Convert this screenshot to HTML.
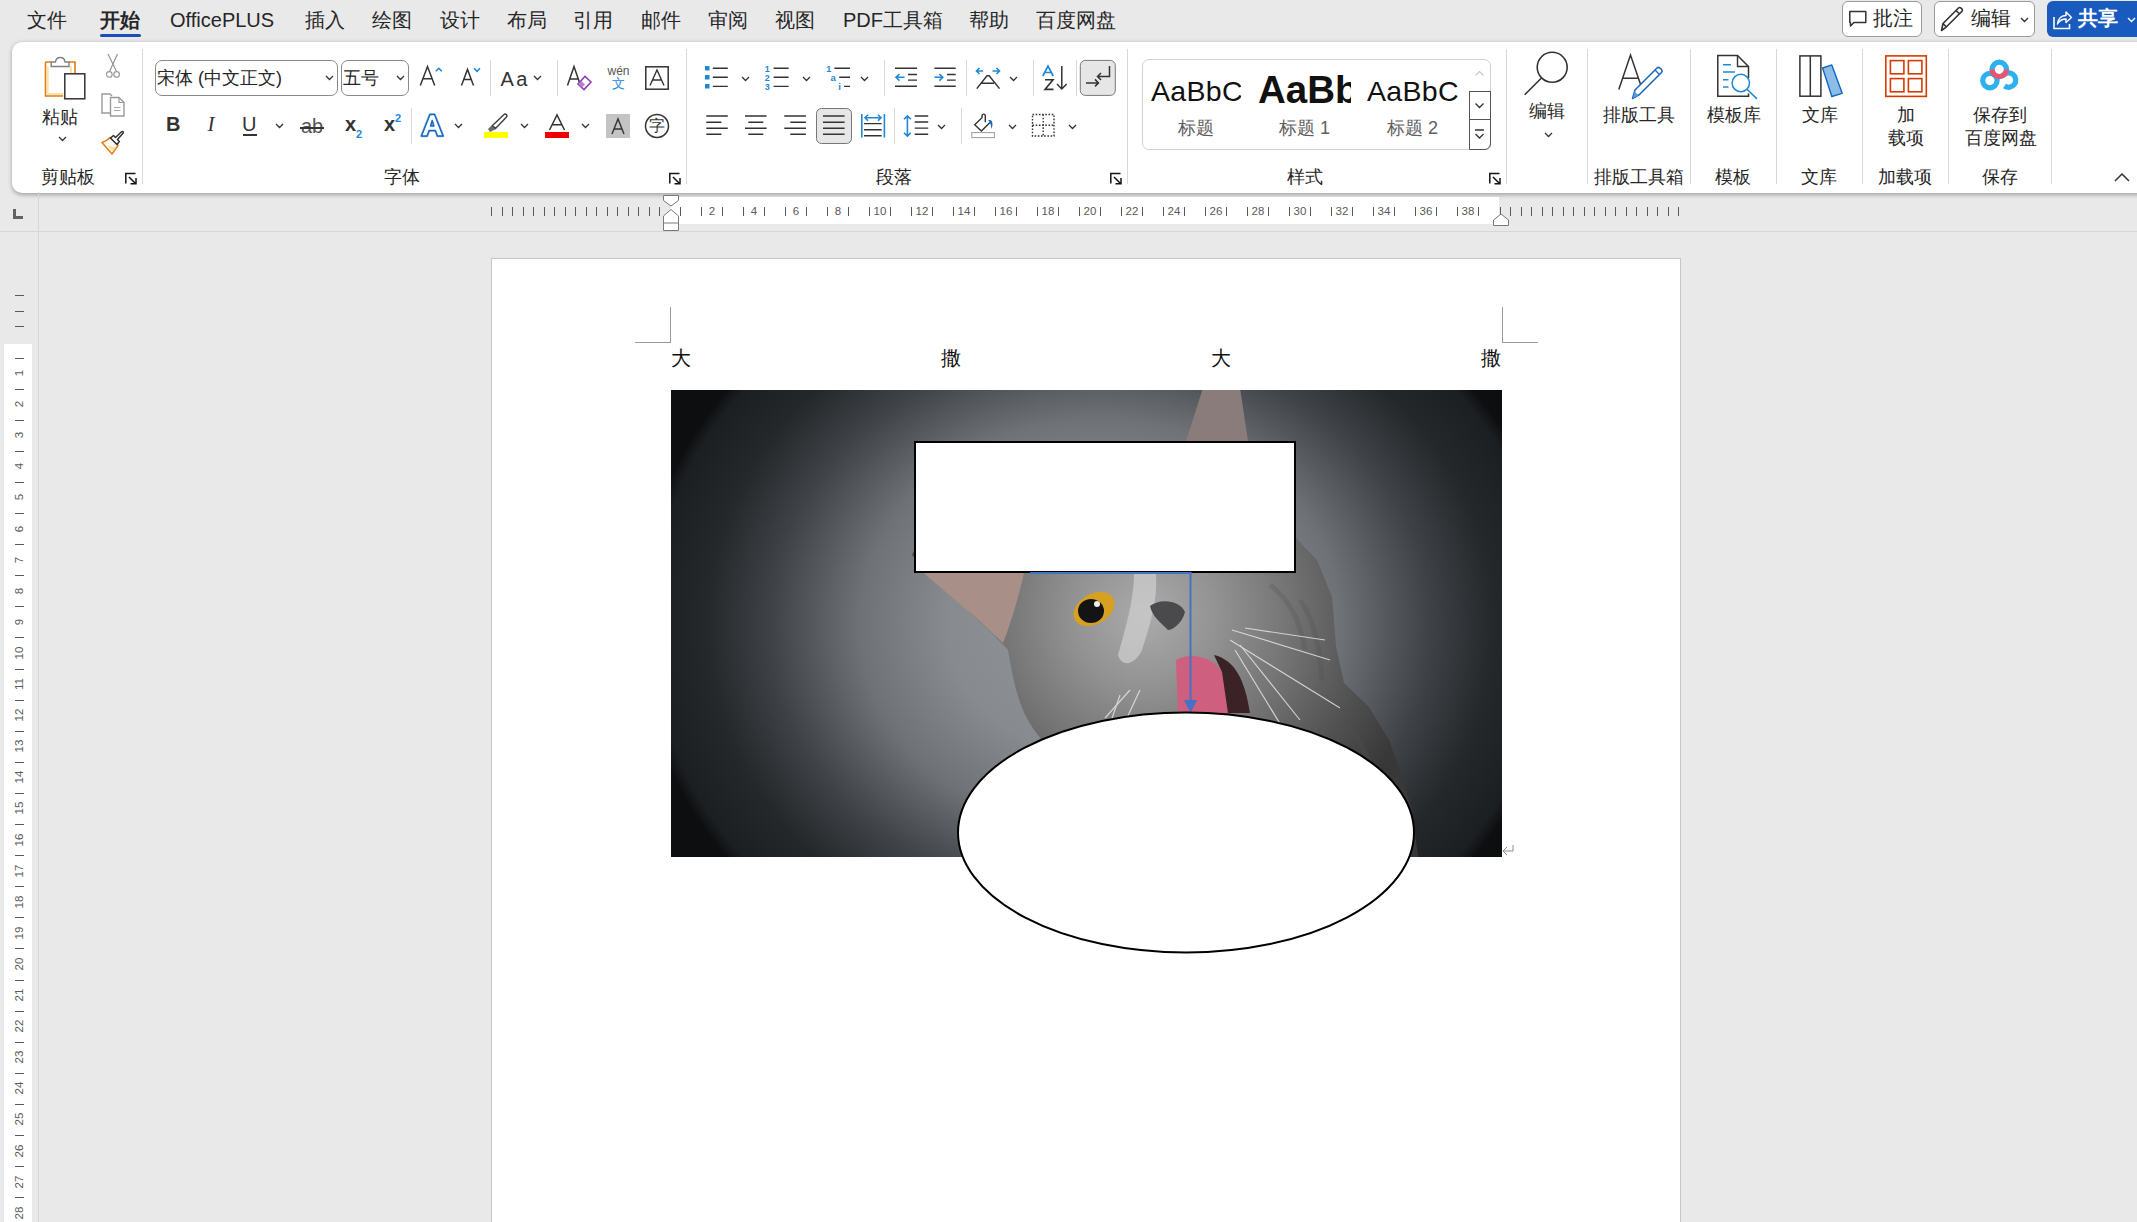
<!DOCTYPE html>
<html><head><meta charset="utf-8">
<style>
*{box-sizing:border-box}
html,body{margin:0;padding:0}
body{width:2137px;height:1222px;overflow:hidden;position:relative;background:#e9e9e9;font-family:"Liberation Sans",sans-serif;color:#262626}
.a{position:absolute}
.tab{position:absolute;top:6px;font-size:20px;line-height:28px;color:#262626;white-space:nowrap}
#ribbon{position:absolute;left:12px;top:42px;width:2140px;height:151px;background:#fff;border-radius:10px 0 0 10px;box-shadow:0 1.5px 4px rgba(0,0,0,.3)}
.sep{position:absolute;width:1px;background:#d8d8d8}
.lbl{position:absolute;top:166px;font-size:18px;line-height:22px;color:#262626;white-space:nowrap}
.ht{position:absolute;top:207px;width:1px;height:9px;background:#5a5a5a}
.hn{position:absolute;top:203px;width:20px;text-align:center;font-size:11.5px;line-height:16px;color:#5a5a5a}
.vt{position:absolute;left:15px;width:9px;height:1px;background:#5a5a5a}
.vn{position:absolute;left:9px;width:20px;height:20px;text-align:center;font-size:11.5px;line-height:20px;color:#5a5a5a;transform:rotate(-90deg)}
.chev{position:absolute;width:9px;height:6px}
</style></head><body>
<!-- tabs -->
<div class="tab" style="left:27px">文件</div>
<div class="tab" style="left:100px;font-weight:bold">开始</div>
<div class="a" style="left:100px;top:34px;width:41px;height:3px;border-radius:2px;background:#1a4fb5"></div>
<div class="tab" style="left:170px">OfficePLUS</div>
<div class="tab" style="left:305px">插入</div>
<div class="tab" style="left:372px">绘图</div>
<div class="tab" style="left:440px">设计</div>
<div class="tab" style="left:507px">布局</div>
<div class="tab" style="left:573px">引用</div>
<div class="tab" style="left:641px">邮件</div>
<div class="tab" style="left:708px">审阅</div>
<div class="tab" style="left:775px">视图</div>
<div class="tab" style="left:843px">PDF工具箱</div>
<div class="tab" style="left:969px">帮助</div>
<div class="tab" style="left:1036px">百度网盘</div>
<!-- top right buttons -->
<div class="a" style="left:1842px;top:1px;width:80px;height:36px;border:1px solid #9a9a9a;border-radius:6px;background:#fff"></div>
<div class="tab" style="left:1873px;top:4px">批注</div>
<svg class="a" style="left:1848px;top:10px" width="19" height="18" viewBox="0 0 19 18"><path d="M1.8 1.5 H17.8 V12.5 H6 L2.5 16 V12.5 H1.8 Z" fill="none" stroke="#333" stroke-width="1.5" stroke-linejoin="round"/></svg>
<div class="a" style="left:1934px;top:1px;width:101px;height:36px;border:1px solid #9a9a9a;border-radius:6px;background:#fff"></div>
<div class="tab" style="left:1971px;top:4px">编辑</div>
<svg class="a" style="left:1940px;top:6px" width="26" height="26" viewBox="0 0 26 26"><path d="M1.5 24.5 L3 17.5 L18.5 2 C20 0.5 23.5 3.5 22 5.2 L6.5 20.8 Z M16 4.5 L19.8 8.3 M3 17.5 L6.5 21" fill="none" stroke="#333" stroke-width="1.6" stroke-linejoin="round"/></svg>
<svg class="chev" style="left:2019.5px;top:16.5px" viewBox="0 0 9 6"><path d="M1 1 L4.5 4.5 L8 1" fill="none" stroke="#333" stroke-width="1.4"/></svg>
<div class="a" style="left:2047px;top:1px;width:100px;height:36px;border-radius:6px;background:#185abd"></div>
<div class="tab" style="left:2078px;top:4px;color:#fff;font-weight:bold">共享</div>
<svg class="a" style="left:2052px;top:9px" width="21" height="21" viewBox="0 0 21 21"><path d="M2 8 V19.5 H17.5 V15" fill="none" stroke="#fff" stroke-width="1.6"/><path d="M5.5 15 C6 9 10 6.5 14 6.5 V3 L19.5 8.5 L14 13.5 V10 C10.5 10 7.5 11.5 5.5 15 Z" fill="none" stroke="#fff" stroke-width="1.5" stroke-linejoin="round"/></svg>
<svg class="chev" style="left:2126.5px;top:16.5px" viewBox="0 0 9 6"><path d="M1 1 L4.5 4.5 L8 1" fill="none" stroke="#fff" stroke-width="1.4"/></svg>
<div id="ribbon"></div>
<!-- clipboard group -->
<svg class="a" style="left:40px;top:52px" width="50" height="50" viewBox="40 52 50 50">
<path d="M45.5 62 H51 M69 62 H75 V76" fill="none" stroke="#e07c12" stroke-width="1.6"/>
<path d="M45.5 62 V96 H63" fill="none" stroke="#e07c12" stroke-width="1.6"/>
<path d="M47.5 66 V94 H63 M71 66 V76" fill="none" stroke="#fbe2a2" stroke-width="2.2"/>
<path d="M51.2 62 H55.5 C56 56 64.5 56 65 62 H69 V66.5 H51.2 Z" fill="#fff" stroke="#808080" stroke-width="1.4"/>
<rect x="64.8" y="73.8" width="20" height="25" fill="#fff" stroke="#333" stroke-width="1.5"/>
</svg>
<div class="a" style="left:42px;top:106px;font-size:18px;line-height:22px;color:#262626">粘贴</div>
<svg class="chev" style="left:57.5px;top:136px" viewBox="0 0 9 6"><path d="M1 1 L4.5 4.5 L8 1" fill="none" stroke="#333" stroke-width="1.3"/></svg>
<svg class="a" style="left:103px;top:53px" width="20" height="26" viewBox="0 0 20 26">
<path d="M5 1 L13.5 18.5 M14.5 1 L6.5 18.5" fill="none" stroke="#8c8c8c" stroke-width="1.1"/>
<circle cx="6.3" cy="21.4" r="2.8" fill="#fff" stroke="#9a9a9a" stroke-width="1.2"/>
<circle cx="13.6" cy="21.4" r="2.8" fill="#fff" stroke="#9a9a9a" stroke-width="1.2"/>
</svg>
<svg class="a" style="left:100px;top:92px" width="26" height="26" viewBox="0 0 26 26">
<path d="M10 21 H2 V2 H10 L12 4" fill="none" stroke="#9a9a9a" stroke-width="1.4"/>
<path d="M10.5 24 V5.5 H19 L24 10.5 V24 Z" fill="#fff" stroke="#9a9a9a" stroke-width="1.4"/>
<path d="M19 5.5 V10.5 H24" fill="none" stroke="#9a9a9a" stroke-width="1.2"/>
<path d="M14 15.5 H20.5 M14 18.5 H20.5" stroke="#a8a8a8" stroke-width="1"/>
</svg>
<svg class="a" style="left:100px;top:130px" width="26" height="26" viewBox="0 0 26 26">
<path d="M2 12.5 C6 11 8 10 10 7.5 L18 15.5 L12 24 Z" fill="#fff" stroke="#e07c12" stroke-width="1.5" stroke-linejoin="round"/>
<path d="M7 15 L16 17.5 L12.5 22 Z" fill="#fbe2a2"/>
<path d="M10.5 8 L13.5 5.5 L15.5 7.5 L21.5 1.8 C22.5 1 23.8 2 23.2 3 L17.5 9.5 L19.3 11.5 L17 14.5 Z" fill="#fff" stroke="#333" stroke-width="1.5" stroke-linejoin="round"/>
</svg>
<div class="lbl" style="left:41px">剪贴板</div>
<svg class="a" style="left:124px;top:172px" width="13" height="13" viewBox="0 0 13 13"><path d="M1.8 11.5 V1.5 H11.5 M5 5 L11.5 11.5 M6.5 11.8 H12 V6" fill="none" stroke="#151515" stroke-width="1.5"/></svg>
<div class="sep" style="left:142px;top:49px;height:135px"></div>
<!-- font group -->
<div class="a" style="left:155px;top:60px;width:183px;height:36px;border:1px solid #8a8a8a;border-radius:7px"></div>
<div class="a" style="left:157px;top:66px;font-size:18px;line-height:24px;color:#262626">宋体 (中文正文)</div>
<svg class="chev" style="left:324.5px;top:75px" viewBox="0 0 9 6"><path d="M1 1 L4.5 4.5 L8 1" fill="none" stroke="#333" stroke-width="1.3"/></svg>
<div class="a" style="left:341px;top:60px;width:68px;height:36px;border:1px solid #8a8a8a;border-radius:7px"></div>
<div class="a" style="left:343px;top:66px;font-size:18px;line-height:24px;color:#262626">五号</div>
<svg class="chev" style="left:395.5px;top:75px" viewBox="0 0 9 6"><path d="M1 1 L4.5 4.5 L8 1" fill="none" stroke="#333" stroke-width="1.3"/></svg>
<!-- grow/shrink -->
<svg class="a" style="left:418px;top:64px" width="28" height="28" viewBox="0 0 28 28">
<path d="M2.3 21.5 L9.5 2.5 L16.7 21.5 M5 14.8 H14" fill="none" stroke="#333" stroke-width="1.5"/>
<path d="M17.8 7.3 L20.8 4.3 L23.8 7.3" fill="none" stroke="#1e88d6" stroke-width="1.6"/>
</svg>
<svg class="a" style="left:459px;top:64px" width="28" height="28" viewBox="0 0 28 28">
<path d="M2.5 21.5 L8.5 5.5 L14.5 21.5 M4.8 15.5 H12.2" fill="none" stroke="#333" stroke-width="1.5"/>
<path d="M15 4.3 L18 7.3 L21 4.3" fill="none" stroke="#1e88d6" stroke-width="1.6"/>
</svg>
<div class="sep" style="left:490px;top:60px;height:36px"></div>
<div class="a" style="left:500.5px;top:65px;font-size:20px;line-height:28px;color:#333;letter-spacing:2.5px">Aa</div>
<svg class="chev" style="left:532.5px;top:75px" viewBox="0 0 9 6"><path d="M1 1 L4.5 4.5 L8 1" fill="none" stroke="#333" stroke-width="1.3"/></svg>
<div class="sep" style="left:557px;top:60px;height:36px"></div>
<svg class="a" style="left:565px;top:63px" width="28" height="28" viewBox="0 0 28 28">
<path d="M2.5 22.5 L9 3.5 L15.5 22.5 M5 16 H13" fill="none" stroke="#333" stroke-width="1.5"/>
<path d="M13 21 L20 13.5 L26 19 L19 26.5 Z" fill="#fff" stroke="#8e3fb8" stroke-width="1.6"/>
<path d="M13.5 21 L16.5 18 L20 21.5 L17 24.5 Z" fill="#b67fd2"/>
</svg>
<div class="a" style="left:607px;top:64px;font-size:12px;line-height:14px;color:#555;width:23px;text-align:center">wén</div>
<div class="a" style="left:607px;top:76px;font-size:13px;line-height:16px;color:#1e88d6;width:23px;text-align:center">文</div>
<svg class="a" style="left:644px;top:65px" width="26" height="26" viewBox="0 0 26 26">
<rect x="1.8" y="1.8" width="22.4" height="22.4" fill="none" stroke="#333" stroke-width="1.5"/>
<path d="M6 20.5 L13 5 L20 20.5 M8.5 15 H17.5" fill="none" stroke="#333" stroke-width="1.4"/>
</svg>
<!-- row 2 -->
<div class="a" style="left:166px;top:112px;font-size:20px;line-height:24px;font-weight:bold;color:#333">B</div>
<div class="a" style="left:207.5px;top:112px;font-size:21px;line-height:24px;font-style:italic;color:#333;font-family:'Liberation Serif',serif">I</div>
<div class="a" style="left:242px;top:112px;font-size:20px;line-height:24px;color:#333">U</div>
<div class="a" style="left:243px;top:134px;width:14px;height:1.5px;background:#333"></div>
<svg class="chev" style="left:275px;top:123px" viewBox="0 0 9 6"><path d="M1 1 L4.5 4.5 L8 1" fill="none" stroke="#333" stroke-width="1.3"/></svg>
<div class="a" style="left:301px;top:114px;font-size:20px;line-height:24px;color:#555">ab</div>
<div class="a" style="left:300px;top:127px;width:24px;height:1.5px;background:#333"></div>
<div class="a" style="left:345px;top:112px;font-size:20px;line-height:24px;color:#333;font-weight:bold">x</div>
<div class="a" style="left:356px;top:127px;font-size:11px;line-height:14px;color:#1e88d6;font-weight:bold">2</div>
<div class="a" style="left:384px;top:112px;font-size:20px;line-height:24px;color:#333;font-weight:bold">x</div>
<div class="a" style="left:395px;top:110.5px;font-size:11px;line-height:14px;color:#1e88d6;font-weight:bold">2</div>
<div class="sep" style="left:411px;top:108px;height:36px"></div>
<svg class="a" style="left:419px;top:112px" width="28" height="28" viewBox="0 0 28 28">
<path d="M2.5 24 L11 2.5 H15.5 L24 24 H18.5 L16.5 18.5 H10 L8 24 Z M11.5 14 H15 L13.2 8.5 Z" fill="#fff" stroke="#7fb6e6" stroke-width="2.6" stroke-linejoin="round"/>
<path d="M2.5 24 L11 2.5 H15.5 L24 24 H18.5 L16.5 18.5 H10 L8 24 Z M11.5 14 H15 L13.2 8.5 Z" fill="#fff" stroke="#1565c0" stroke-width="1.4" stroke-linejoin="round"/>
</svg>
<svg class="chev" style="left:454px;top:123px" viewBox="0 0 9 6"><path d="M1 1 L4.5 4.5 L8 1" fill="none" stroke="#333" stroke-width="1.3"/></svg>
<svg class="a" style="left:482px;top:111px" width="28" height="28" viewBox="0 0 28 28">
<path d="M6 18 L10 14 L14 18 L8 21 Z" fill="#6b6b6b"/>
<path d="M10.5 14.5 L22 3.5 C23.5 2 26 4.5 24.5 6 L13.5 17.5 Z" fill="#fff" stroke="#444" stroke-width="1.5" stroke-linejoin="round"/>
<rect x="2" y="21" width="24" height="6" fill="#ffff00"/>
</svg>
<svg class="chev" style="left:520px;top:123px" viewBox="0 0 9 6"><path d="M1 1 L4.5 4.5 L8 1" fill="none" stroke="#333" stroke-width="1.3"/></svg>
<svg class="a" style="left:544px;top:111px" width="28" height="28" viewBox="0 0 28 28">
<path d="M5.5 19 L13 4 L20.5 19 M8.2 13.8 H17.8" fill="none" stroke="#333" stroke-width="1.5"/>
<rect x="1" y="21" width="24" height="6" fill="#f00000"/>
</svg>
<svg class="chev" style="left:581px;top:123px" viewBox="0 0 9 6"><path d="M1 1 L4.5 4.5 L8 1" fill="none" stroke="#333" stroke-width="1.3"/></svg>
<svg class="a" style="left:606px;top:114px" width="24" height="24" viewBox="0 0 24 24">
<rect x="0" y="0" width="24" height="24" fill="#c4c4c4"/>
<path d="M6 20 L12 5 L18 20 M8.3 15 H15.7" fill="none" stroke="#333" stroke-width="1.4"/>
</svg>
<svg class="a" style="left:644px;top:113px" width="26" height="26" viewBox="0 0 26 26">
<circle cx="13" cy="13" r="11.5" fill="none" stroke="#333" stroke-width="1.5"/>
</svg>
<div class="a" style="left:647px;top:115px;font-size:16px;line-height:22px;color:#333;width:20px;text-align:center">字</div>
<div class="lbl" style="left:384px">字体</div>
<svg class="a" style="left:668px;top:172px" width="13" height="13" viewBox="0 0 13 13"><path d="M1.8 11.5 V1.5 H11.5 M5 5 L11.5 11.5 M6.5 11.8 H12 V6" fill="none" stroke="#151515" stroke-width="1.5"/></svg>
<div class="sep" style="left:686px;top:49px;height:135px"></div>
<!-- paragraph group -->
<svg class="a" style="left:700px;top:58px" width="430" height="95" viewBox="700 58 430 95">
<g fill="#1e88d6">
<rect x="705" y="66" width="4.5" height="4.5"/><rect x="705" y="75" width="4.5" height="4.5"/><rect x="705" y="84" width="4.5" height="4.5"/>
</g>
<g stroke="#333" stroke-width="1.4" fill="none">
<path d="M712.8 68.2 H727.8 M712.8 77.3 H727.8 M712.8 86.4 H727.8"/>
<path d="M773.6 68.2 H788.6 M773.6 77.3 H788.6 M773.6 86.4 H788.6"/>
<path d="M834.4 68.2 H850 M839.2 77.3 H850 M844 86.4 H850"/>
<path d="M895 68.3 H917 M908 74.5 H917 M908 80.1 H917 M895 86.3 H917"/>
<path d="M934.4 68.3 H955.7 M947 74.5 H955.7 M947 80.1 H955.7 M934.4 86.3 H955.7"/>
<path d="M976.8 88.6 L987 75.8 H989.2 L999.5 88.6 M981.5 83.2 H994" stroke-width="1.5"/>
<path d="M1045 79.8 H1053 L1045 89.4 H1053.5" stroke-width="1.6"/>
<path d="M1061.8 66 V89 M1057 84 L1061.8 89 L1066.6 84" stroke-width="1.5"/>
</g>
<g stroke="#1e88d6" stroke-width="1.6" fill="none">
<path d="M896 77.3 H904.6 M899.5 74 L896 77.3 L899.5 80.6"/>
<path d="M934.4 77.3 H942.8 M939.3 74 L942.8 77.3 L939.3 80.6"/>
<path d="M976.5 71 H983 M979.5 68 L976.5 71 L979.5 74"/>
<path d="M992.5 71 H999.5 M996.5 68 L999.5 71 L996.5 74"/>
<path d="M1042.8 76 L1048 66 L1053.2 76 M1044.5 72.5 H1051.5" stroke-width="1.7"/>
</g>
<g fill="#1e88d6" font-family="Liberation Sans" font-weight="bold">
<text x="764.8" y="71.5" font-size="9">1</text><text x="764.8" y="80.6" font-size="9">2</text><text x="764.8" y="89.7" font-size="9">3</text>
<text x="826.2" y="71.5" font-size="9">1</text><text x="830.5" y="80.6" font-size="9.5">a</text><text x="838.2" y="89.7" font-size="9.5">i</text>
</g>
<!-- show/hide btn -->
<rect x="1080.3" y="60.4" width="35" height="35" rx="5" fill="#e6e6e6" stroke="#777" stroke-width="1"/>
<g stroke="#333" stroke-width="1.5" fill="none">
<path d="M1109.5 66 V76.5 H1097.5 M1101 73 L1097.5 76.5 L1101 80"/>
<path d="M1086 82.9 H1098.5 M1095 79.4 L1098.5 82.9 L1095 86.4"/>
</g>
<!-- row 2 -->
<g stroke="#333" stroke-width="1.4" fill="none">
<path d="M706.3 116 H727.8 M706.3 122.2 H721.4 M706.3 128.2 H727.8 M706.3 134.3 H721.4"/>
<path d="M745 116 H766.6 M748.3 122.2 H763.3 M745 128.2 H766.6 M748.3 134.3 H763.3"/>
<path d="M784.3 116 H805.9 M790.3 122.2 H805.9 M784.3 128.2 H805.9 M790.3 134.3 H805.9"/>
</g>
<rect x="816.5" y="108.5" width="35" height="35" rx="5" fill="#e6e6e6" stroke="#777" stroke-width="1"/>
<g stroke="#333" stroke-width="1.4" fill="none">
<path d="M823 116 H844.6 M823 122.2 H844.6 M823 128.2 H844.6 M823 134.3 H844.6"/>
<path d="M864 123.6 H881.7 M864 129.7 H881.7 M864 135.7 H881.7"/>
<path d="M914.7 116 H928.2 M914.7 122 H928.2 M914.7 128.1 H928.2 M914.7 134.2 H928.2"/>
<path d="M985.3 122.3 V116 C985.3 113.5 982 113.5 982 116 V117.8 L974.7 124.7 L981.4 131 L990 122.4" stroke-width="1.4"/>
</g>
<g stroke="#1e88d6" stroke-width="1.6" fill="none">
<path d="M861.8 113.9 V137.6 M884.4 113.9 V137.6 M865 117.7 H881 M868 114.7 L865 117.7 L868 120.7 M878 114.7 L881 117.7 L878 120.7"/>
<path d="M907.4 116 V136 M904 119.3 L907.4 115.9 L910.8 119.3 M904 132.7 L907.4 136.1 L910.8 132.7"/>
</g>
<path d="M988.2 120.3 C992.5 118.5 993.5 124 991.5 129 C991 125 990.5 122.5 988.2 120.3 Z" fill="#1565c0"/>
<rect x="971.8" y="132.6" width="22.6" height="5" fill="#fff" stroke="#9a9a9a" stroke-width="1"/>
<g stroke="#333" stroke-width="1.4" fill="none" stroke-dasharray="1.6 1.6">
<rect x="1032.5" y="114.5" width="21.5" height="21.5"/>
<path d="M1043.2 114.5 V136 M1032.5 125.2 H1054"/>
</g>
</svg>
<svg class="chev" style="left:741px;top:76px" viewBox="0 0 9 6"><path d="M1 1 L4.5 4.5 L8 1" fill="none" stroke="#333" stroke-width="1.3"/></svg>
<svg class="chev" style="left:802px;top:76px" viewBox="0 0 9 6"><path d="M1 1 L4.5 4.5 L8 1" fill="none" stroke="#333" stroke-width="1.3"/></svg>
<svg class="chev" style="left:860px;top:76px" viewBox="0 0 9 6"><path d="M1 1 L4.5 4.5 L8 1" fill="none" stroke="#333" stroke-width="1.3"/></svg>
<svg class="chev" style="left:1009px;top:76px" viewBox="0 0 9 6"><path d="M1 1 L4.5 4.5 L8 1" fill="none" stroke="#333" stroke-width="1.3"/></svg>
<svg class="chev" style="left:937px;top:124px" viewBox="0 0 9 6"><path d="M1 1 L4.5 4.5 L8 1" fill="none" stroke="#333" stroke-width="1.3"/></svg>
<svg class="chev" style="left:1007.5px;top:124px" viewBox="0 0 9 6"><path d="M1 1 L4.5 4.5 L8 1" fill="none" stroke="#333" stroke-width="1.3"/></svg>
<svg class="chev" style="left:1068px;top:124px" viewBox="0 0 9 6"><path d="M1 1 L4.5 4.5 L8 1" fill="none" stroke="#333" stroke-width="1.3"/></svg>
<div class="sep" style="left:884px;top:60px;height:36px"></div>
<div class="sep" style="left:966px;top:60px;height:36px"></div>
<div class="sep" style="left:1033px;top:60px;height:36px"></div>
<div class="sep" style="left:1076px;top:60px;height:36px"></div>
<div class="sep" style="left:894px;top:108px;height:36px"></div>
<div class="sep" style="left:961px;top:108px;height:36px"></div>
<div class="lbl" style="left:876px">段落</div>
<svg class="a" style="left:1109px;top:172px" width="13" height="13" viewBox="0 0 13 13"><path d="M1.8 11.5 V1.5 H11.5 M5 5 L11.5 11.5 M6.5 11.8 H12 V6" fill="none" stroke="#151515" stroke-width="1.5"/></svg>
<div class="sep" style="left:1127px;top:49px;height:135px"></div>
<!-- styles -->
<div class="a" style="left:1141.5px;top:59px;width:349.5px;height:91px;border:1px solid #d2d2d2;border-radius:7px"></div>
<div class="a" style="left:1151px;top:71px;width:90px;height:40px;overflow:hidden;font-size:28.5px;line-height:40px;color:#111;letter-spacing:0.3px;white-space:nowrap">AaBbC</div>
<div class="a" style="left:1258px;top:66.5px;width:92.5px;height:46px;overflow:hidden;font-size:38.5px;line-height:46px;color:#111;font-weight:bold;white-space:nowrap">AaBb</div>
<div class="a" style="left:1367px;top:71px;width:90.5px;height:40px;overflow:hidden;font-size:28.5px;line-height:40px;color:#111;letter-spacing:0.3px;white-space:nowrap">AaBbC</div>
<div class="a" style="left:1178px;top:117px;font-size:18px;line-height:22px;color:#5e5e5e">标题</div>
<div class="a" style="left:1279px;top:117px;font-size:18px;line-height:22px;color:#5e5e5e">标题 1</div>
<div class="a" style="left:1387px;top:117px;font-size:18px;line-height:22px;color:#5e5e5e">标题 2</div>
<div class="a" style="left:1468.5px;top:91px;width:22.5px;height:29px;border:1px solid #555"></div>
<div class="a" style="left:1468.5px;top:119px;width:22.5px;height:31px;border:1px solid #555;border-radius:0 0 6px 0"></div>
<svg class="a" style="left:1468px;top:59px" width="24" height="92" viewBox="0 0 24 92">
<path d="M7.5 16.5 L11.5 12.5 L15.5 16.5" fill="none" stroke="#c8c8c8" stroke-width="1.2"/>
<path d="M7.5 44.5 L11.5 48.5 L15.5 44.5" fill="none" stroke="#333" stroke-width="1.3"/>
<path d="M7 71 H16 M7.5 75 L11.5 79 L15.5 75" fill="none" stroke="#333" stroke-width="1.3"/>
</svg>
<div class="lbl" style="left:1287px">样式</div>
<svg class="a" style="left:1488px;top:172px" width="13" height="13" viewBox="0 0 13 13"><path d="M1.8 11.5 V1.5 H11.5 M5 5 L11.5 11.5 M6.5 11.8 H12 V6" fill="none" stroke="#151515" stroke-width="1.5"/></svg>
<div class="sep" style="left:1506px;top:49px;height:135px"></div>
<!-- right groups -->
<svg class="a" style="left:1520px;top:50px" width="50" height="50" viewBox="1520 50 50 50">
<circle cx="1552.2" cy="67.3" r="15" fill="none" stroke="#333" stroke-width="1.6"/>
<path d="M1541.2 78.3 L1524.7 94.8" stroke="#333" stroke-width="1.6"/>
</svg>
<div class="a" style="left:1529px;top:100px;font-size:18px;line-height:22px;color:#262626">编辑</div>
<svg class="chev" style="left:1544px;top:132px" viewBox="0 0 9 6"><path d="M1 1 L4.5 4.5 L8 1" fill="none" stroke="#333" stroke-width="1.3"/></svg>
<div class="sep" style="left:1587px;top:49px;height:135px"></div>
<svg class="a" style="left:1615px;top:52px" width="50" height="50" viewBox="1615 52 50 50">
<path d="M1618.8 89.5 L1630.5 55 L1642.3 89.5 M1622.8 78.3 H1638.3" fill="none" stroke="#333" stroke-width="1.5"/>
<path d="M1632.5 98.5 L1635 90 L1657 68 C1659 66 1663.5 70.5 1661.5 72.5 L1639.5 94.5 Z" fill="#fff" stroke="#1565c0" stroke-width="1.5" stroke-linejoin="round"/>
<path d="M1632.8 98.2 L1634.6 91.5 L1638.5 95.3 Z" fill="#5a9be0"/>
<path d="M1655 70 L1659.5 74.5" stroke="#1565c0" stroke-width="1.2"/>
</svg>
<div class="a" style="left:1603px;top:104px;font-size:18px;line-height:22px;color:#262626">排版工具</div>
<div class="lbl" style="left:1593.5px">排版工具箱</div>
<div class="sep" style="left:1690px;top:49px;height:135px"></div>
<svg class="a" style="left:1712px;top:52px" width="50" height="50" viewBox="1712 52 50 50">
<path d="M1748.5 78 V66.5 L1737.5 55.5 H1717.8 V96.3 H1748.5 V93.5" fill="none" stroke="#333" stroke-width="1.5" stroke-linejoin="miter"/>
<path d="M1737.5 55.5 V66.5 H1748.5" fill="none" stroke="#333" stroke-width="1.4"/>
<path d="M1723 64.7 H1731 M1723 71.9 H1735 M1723 79.7 H1728.5 M1723 86.9 H1728.5" stroke="#1e88d6" stroke-width="1.5"/>
<circle cx="1740.8" cy="83" r="8.7" fill="#fff" stroke="#1e88d6" stroke-width="1.5"/>
<path d="M1747 89.2 L1757 98.9" stroke="#1e88d6" stroke-width="1.5"/>
</svg>
<div class="a" style="left:1707px;top:104px;font-size:18px;line-height:22px;color:#262626">模板库</div>
<div class="lbl" style="left:1715px">模板</div>
<div class="sep" style="left:1776px;top:49px;height:135px"></div>
<svg class="a" style="left:1795px;top:52px" width="50" height="50" viewBox="1795 52 50 50">
<rect x="1799.9" y="55.9" width="21" height="40.3" fill="none" stroke="#333" stroke-width="1.5"/>
<path d="M1810.3 55.9 V96.2" stroke="#333" stroke-width="1.5"/>
<path d="M1822.6 68 L1831.8 64.9 L1842.2 93.3 L1831.8 96.5 Z" fill="#8cbde8" stroke="#1565c0" stroke-width="1.4" stroke-linejoin="round"/>
</svg>
<div class="a" style="left:1801.5px;top:104px;font-size:18px;line-height:22px;color:#262626">文库</div>
<div class="lbl" style="left:1801px">文库</div>
<div class="sep" style="left:1862px;top:49px;height:135px"></div>
<svg class="a" style="left:1880px;top:52px" width="50" height="50" viewBox="1880 52 50 50">
<g fill="none" stroke="#d83b01" stroke-width="1.6">
<rect x="1885.8" y="55.9" width="40.5" height="40.5"/>
<rect x="1890.4" y="60.6" width="13.5" height="13.2"/><rect x="1908.4" y="60.6" width="13.5" height="13.2"/>
<rect x="1890.4" y="78.6" width="13.5" height="13.2"/><rect x="1908.4" y="78.6" width="13.5" height="13.2"/>
</g>
</svg>
<div class="a" style="left:1897px;top:104px;font-size:18px;line-height:22px;color:#262626">加</div>
<div class="a" style="left:1888px;top:127px;font-size:18px;line-height:22px;color:#262626">载项</div>
<div class="lbl" style="left:1878px">加载项</div>
<div class="sep" style="left:1948px;top:49px;height:135px"></div>
<svg class="a" style="left:1975px;top:52px" width="50" height="45" viewBox="1975 52 50 45">
<circle cx="1989.9" cy="80.6" r="7.2" fill="none" stroke="#2cb0ee" stroke-width="5.2"/>
<path d="M2003 75.5 A7.2 7.2 0 1 1 2004.5 86" fill="none" stroke="#2cb0ee" stroke-width="5.2"/>
<circle cx="1999.3" cy="69.4" r="7.2" fill="none" stroke="#2cb0ee" stroke-width="5.2"/>
<path d="M1992.1 69.4 A7.2 7.2 0 0 0 2006.5 69.4" fill="none" stroke="#ea5470" stroke-width="5.2"/>
</svg>
<div class="a" style="left:1973px;top:104px;font-size:18px;line-height:22px;color:#262626">保存到</div>
<div class="a" style="left:1965px;top:127px;font-size:18px;line-height:22px;color:#262626">百度网盘</div>
<div class="lbl" style="left:1982px">保存</div>
<div class="sep" style="left:2051px;top:49px;height:135px"></div>
<svg class="a" style="left:2113px;top:170px" width="18" height="13" viewBox="0 0 18 13"><path d="M2 11 L9 4 L16 11" fill="none" stroke="#333" stroke-width="1.5"/></svg>
<!-- ruler -->

<div class="a" style="left:0;top:231px;width:2137px;height:1px;background:#d6d6d6"></div>
<div class="a" style="left:38px;top:192px;width:1px;height:1030px;background:#d6d6d6"></div>
<div class="a" style="left:671px;top:197px;width:828px;height:27px;background:#fff"></div>
<div class="ht" style="left:1499.5px"></div>
<div class="a" style="left:13px;top:209px;width:10px;height:10px;border-left:3.5px solid #5f6368;border-bottom:3.5px solid #5f6368"></div>
<div class="a" style="left:4px;top:344px;width:28px;height:900px;background:#fff"></div>
<div class="ht" style="left:491.0px"></div>
<div class="ht" style="left:501.5px"></div>
<div class="ht" style="left:512.0px"></div>
<div class="ht" style="left:522.5px"></div>
<div class="ht" style="left:533.0px"></div>
<div class="ht" style="left:543.5px"></div>
<div class="ht" style="left:554.0px"></div>
<div class="ht" style="left:564.5px"></div>
<div class="ht" style="left:575.0px"></div>
<div class="ht" style="left:585.5px"></div>
<div class="ht" style="left:596.0px"></div>
<div class="ht" style="left:606.5px"></div>
<div class="ht" style="left:617.0px"></div>
<div class="ht" style="left:627.5px"></div>
<div class="ht" style="left:638.0px"></div>
<div class="ht" style="left:648.5px"></div>
<div class="ht" style="left:659.0px"></div>
<div class="hn" style="left:702.0px">2</div>
<div class="hn" style="left:744.0px">4</div>
<div class="hn" style="left:786.0px">6</div>
<div class="hn" style="left:828.0px">8</div>
<div class="hn" style="left:870.0px">10</div>
<div class="hn" style="left:912.0px">12</div>
<div class="hn" style="left:954.0px">14</div>
<div class="hn" style="left:996.0px">16</div>
<div class="hn" style="left:1038.0px">18</div>
<div class="hn" style="left:1080.0px">20</div>
<div class="hn" style="left:1122.0px">22</div>
<div class="hn" style="left:1164.0px">24</div>
<div class="hn" style="left:1206.0px">26</div>
<div class="hn" style="left:1248.0px">28</div>
<div class="hn" style="left:1290.0px">30</div>
<div class="hn" style="left:1332.0px">32</div>
<div class="hn" style="left:1374.0px">34</div>
<div class="hn" style="left:1416.0px">36</div>
<div class="hn" style="left:1458.0px">38</div>
<div class="vt" style="top:295.2px"></div>
<div class="vt" style="top:310.7px"></div>
<div class="vt" style="top:326.2px"></div>
<div class="vt" style="top:357.5px"></div>
<div class="vt" style="top:388.6px"></div>
<div class="vt" style="top:419.7px"></div>
<div class="vt" style="top:450.8px"></div>
<div class="vt" style="top:481.9px"></div>
<div class="vt" style="top:513.0px"></div>
<div class="vt" style="top:544.1px"></div>
<div class="vt" style="top:575.2px"></div>
<div class="vt" style="top:606.3px"></div>
<div class="vt" style="top:637.4px"></div>
<div class="vt" style="top:668.5px"></div>
<div class="vt" style="top:699.6px"></div>
<div class="vt" style="top:730.7px"></div>
<div class="vt" style="top:761.8px"></div>
<div class="vt" style="top:792.9px"></div>
<div class="vt" style="top:824.0px"></div>
<div class="vt" style="top:855.1px"></div>
<div class="vt" style="top:886.2px"></div>
<div class="vt" style="top:917.3px"></div>
<div class="vt" style="top:948.4px"></div>
<div class="vt" style="top:979.5px"></div>
<div class="vt" style="top:1010.6px"></div>
<div class="vt" style="top:1041.7px"></div>
<div class="vt" style="top:1072.8px"></div>
<div class="vt" style="top:1103.9px"></div>
<div class="vt" style="top:1135.0px"></div>
<div class="vt" style="top:1166.1px"></div>
<div class="vt" style="top:1197.2px"></div>
<div class="vn" style="top:363.0px">1</div>
<div class="vn" style="top:394.1px">2</div>
<div class="vn" style="top:425.2px">3</div>
<div class="vn" style="top:456.3px">4</div>
<div class="vn" style="top:487.4px">5</div>
<div class="vn" style="top:518.5px">6</div>
<div class="vn" style="top:549.6px">7</div>
<div class="vn" style="top:580.7px">8</div>
<div class="vn" style="top:611.8px">9</div>
<div class="vn" style="top:642.9px">10</div>
<div class="vn" style="top:674.0px">11</div>
<div class="vn" style="top:705.1px">12</div>
<div class="vn" style="top:736.2px">13</div>
<div class="vn" style="top:767.3px">14</div>
<div class="vn" style="top:798.4px">15</div>
<div class="vn" style="top:829.5px">16</div>
<div class="vn" style="top:860.6px">17</div>
<div class="vn" style="top:891.7px">18</div>
<div class="vn" style="top:922.8px">19</div>
<div class="vn" style="top:953.9px">20</div>
<div class="vn" style="top:985.0px">21</div>
<div class="vn" style="top:1016.1px">22</div>
<div class="vn" style="top:1047.2px">23</div>
<div class="vn" style="top:1078.3px">24</div>
<div class="vn" style="top:1109.4px">25</div>
<div class="vn" style="top:1140.5px">26</div>
<div class="vn" style="top:1171.6px">27</div>
<div class="vn" style="top:1202.7px">28</div>
<div class="ht" style="left:680px"></div>
<div class="ht" style="left:701px"></div>
<div class="ht" style="left:722px"></div>
<div class="ht" style="left:743px"></div>
<div class="ht" style="left:764px"></div>
<div class="ht" style="left:785px"></div>
<div class="ht" style="left:806px"></div>
<div class="ht" style="left:827px"></div>
<div class="ht" style="left:848px"></div>
<div class="ht" style="left:869px"></div>
<div class="ht" style="left:890px"></div>
<div class="ht" style="left:911px"></div>
<div class="ht" style="left:932px"></div>
<div class="ht" style="left:953px"></div>
<div class="ht" style="left:974px"></div>
<div class="ht" style="left:995px"></div>
<div class="ht" style="left:1016px"></div>
<div class="ht" style="left:1037px"></div>
<div class="ht" style="left:1058px"></div>
<div class="ht" style="left:1079px"></div>
<div class="ht" style="left:1100px"></div>
<div class="ht" style="left:1121px"></div>
<div class="ht" style="left:1142px"></div>
<div class="ht" style="left:1163px"></div>
<div class="ht" style="left:1184px"></div>
<div class="ht" style="left:1205px"></div>
<div class="ht" style="left:1226px"></div>
<div class="ht" style="left:1247px"></div>
<div class="ht" style="left:1268px"></div>
<div class="ht" style="left:1289px"></div>
<div class="ht" style="left:1310px"></div>
<div class="ht" style="left:1331px"></div>
<div class="ht" style="left:1352px"></div>
<div class="ht" style="left:1373px"></div>
<div class="ht" style="left:1394px"></div>
<div class="ht" style="left:1415px"></div>
<div class="ht" style="left:1436px"></div>
<div class="ht" style="left:1457px"></div>
<div class="ht" style="left:1478px"></div>
<div class="ht" style="left:1510.0px"></div>
<div class="ht" style="left:1520.5px"></div>
<div class="ht" style="left:1531.0px"></div>
<div class="ht" style="left:1541.5px"></div>
<div class="ht" style="left:1552.0px"></div>
<div class="ht" style="left:1562.5px"></div>
<div class="ht" style="left:1573.0px"></div>
<div class="ht" style="left:1583.5px"></div>
<div class="ht" style="left:1594.0px"></div>
<div class="ht" style="left:1604.5px"></div>
<div class="ht" style="left:1615.0px"></div>
<div class="ht" style="left:1625.5px"></div>
<div class="ht" style="left:1636.0px"></div>
<div class="ht" style="left:1646.5px"></div>
<div class="ht" style="left:1657.0px"></div>
<div class="ht" style="left:1667.5px"></div>
<div class="ht" style="left:1678.0px"></div>
<svg class="a" style="left:660px;top:194px" width="24" height="40" viewBox="0 0 24 40">
<path d="M3.5 1.5 H18.5 V6.5 L11 12 L3.5 6.5 Z" fill="#fff" stroke="#7a7a7a" stroke-width="1"/>
<path d="M3.5 36.5 V22 L11 15.5 L18.5 22 V36.5 Z M3.5 29 H18.5" fill="#fff" stroke="#7a7a7a" stroke-width="1"/>
</svg>
<svg class="a" style="left:1490px;top:211px" width="24" height="20" viewBox="0 0 24 20">
<path d="M3.5 14.5 V9 L11 3 L18.5 9 V14.5 Z" fill="#fff" stroke="#7a7a7a" stroke-width="1"/>
</svg>
<!-- page -->
<div class="a" style="left:491px;top:258px;width:1190px;height:1000px;background:#fff;border:1px solid #c6c6c6"></div>
<div class="a" style="left:670px;top:307px;width:1px;height:36px;background:#9a9a9a"></div>
<div class="a" style="left:635px;top:342px;width:36px;height:1px;background:#9a9a9a"></div>
<div class="a" style="left:1502px;top:307px;width:1px;height:36px;background:#9a9a9a"></div>
<div class="a" style="left:1502px;top:342px;width:36px;height:1px;background:#9a9a9a"></div>
<div class="a" style="left:671px;top:344px;font-size:20px;line-height:28px;color:#111;font-weight:300;font-family:'Liberation Serif',serif">大</div>
<div class="a" style="left:941px;top:344px;font-size:20px;line-height:28px;color:#111;font-weight:300;font-family:'Liberation Serif',serif">撒</div>
<div class="a" style="left:1211px;top:344px;font-size:20px;line-height:28px;color:#111;font-weight:300;font-family:'Liberation Serif',serif">大</div>
<div class="a" style="left:1481px;top:344px;font-size:20px;line-height:28px;color:#111;font-weight:300;font-family:'Liberation Serif',serif">撒</div>
<!-- image -->
<svg class="a" style="left:0;top:0" width="2137" height="1222" viewBox="0 0 2137 1222">
<defs>
<radialGradient id="bg" gradientUnits="userSpaceOnUse" cx="0" cy="0" r="1" gradientTransform="translate(1100 624) scale(463 395)">
<stop offset="0" stop-color="#929699"/>
<stop offset="0.33" stop-color="#878b8f"/>
<stop offset="0.52" stop-color="#6e7276"/>
<stop offset="0.62" stop-color="#55595d"/>
<stop offset="0.71" stop-color="#3f4246"/>
<stop offset="0.85" stop-color="#25282b"/>
<stop offset="0.97" stop-color="#1c1f22"/>
<stop offset="0.99" stop-color="#121416"/>
<stop offset="1" stop-color="#0c0e10"/>
</radialGradient>
<radialGradient id="fur" gradientUnits="userSpaceOnUse" cx="1145" cy="615" r="280">
<stop offset="0" stop-color="#ababab"/>
<stop offset="0.25" stop-color="#939393"/>
<stop offset="0.5" stop-color="#767676"/>
<stop offset="0.75" stop-color="#565656"/>
<stop offset="1" stop-color="#383838"/>
</radialGradient>
<clipPath id="ic"><rect x="671" y="390" width="831" height="467"/></clipPath>
</defs>
<g clip-path="url(#ic)">
<rect x="671" y="390" width="831" height="467" fill="url(#bg)"/>
<path d="M1186 441 L1203 388 L1240 388 L1248 441 Z" fill="#8a7c7a"/>
<path d="M912 555 L940 585 L993 634 L1008 650 C1015 690 1020 715 1042 740 L1060 770 L1250 820 L1420 860 L1418 856 L1412 810 L1401 773 L1389 740 L1369 707 L1344 683 L1336 646 L1332 597 L1317 560 L1295 537 L1296 441 L920 441 L920 538 Z" fill="url(#fur)"/>
<path d="M918 568 L1024 573 C1018 600 1010 625 1003 643 C985 625 955 600 918 568 Z" fill="#a89088"/>
<path d="M1134 574 L1156 574 C1158 600 1150 625 1142 650 C1135 665 1122 668 1118 655 C1125 630 1134 600 1134 574 Z" fill="#d0d0d0" opacity="0.7"/>
<g stroke="#505050" stroke-width="5" opacity="0.25" fill="none"><path d="M1270 585 C1290 600 1300 620 1305 650"/><path d="M1300 600 C1315 620 1320 650 1322 680"/><path d="M1345 720 C1360 740 1370 760 1380 790"/></g>
<ellipse cx="1094" cy="609" rx="22" ry="15" fill="#d8a020" transform="rotate(-30 1094 609)"/>
<ellipse cx="1091" cy="611" rx="13" ry="12" fill="#141414"/>
<circle cx="1097" cy="604" r="3" fill="#eee"/>
<path d="M1150 606 C1160 598 1180 600 1185 612 C1182 624 1172 630 1168 630 C1160 622 1152 616 1150 606 Z" fill="#4a4a4d"/>
<path d="M1176 660 C1190 652 1212 656 1222 672 L1228 713 L1178 713 Z" fill="#cf5f7e"/>
<path d="M1214 655 C1235 660 1245 680 1250 713 L1228 713 L1222 672 Z" fill="#3a2226"/>
<g stroke="#e8e8e8" stroke-width="1.2" fill="none" opacity="0.8">
<path d="M1230 640 L1340 708"/><path d="M1232 630 L1330 660"/><path d="M1240 645 L1300 720"/><path d="M1130 690 L1105 718"/><path d="M1140 690 L1125 722"/><path d="M1245 628 L1325 640"/><path d="M1235 650 L1290 740"/><path d="M1120 695 L1108 730"/>
</g>
</g>
<rect x="915" y="442" width="380" height="130" fill="#fff" stroke="#000" stroke-width="2"/>
<path d="M1030 573 L1190.5 573 L1190.5 703" fill="none" stroke="#4472c4" stroke-width="2"/>
<path d="M1184 700 L1197 700 L1190.5 713 Z" fill="#4472c4"/>
<ellipse cx="1186" cy="832.5" rx="228" ry="120" fill="#fff" stroke="#000" stroke-width="2"/>
<path d="M1503 851 L1513 851 M1503 851 L1507 847 M1503 851 L1507 855 M1513 851 L1513 845" stroke="#8a8a8a" stroke-width="1" fill="none"/>
</svg>
</body></html>
